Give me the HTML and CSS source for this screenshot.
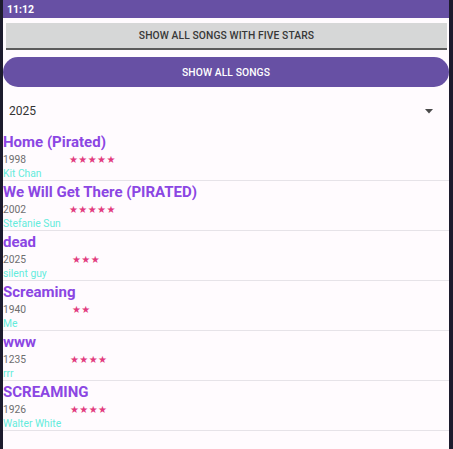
FILE: index.html
```html
<!DOCTYPE html>
<html>
<head>
<meta charset="utf-8">
<link rel="stylesheet" href="styles.css">
</head>
<body>
<div class="screen">
  <div class="status">11:12</div>
  <div class="btn-gray">SHOW ALL SONGS WITH FIVE STARS</div>
  <div class="btn-purple">SHOW ALL SONGS</div>
  <div class="spinner">
    <span class="spinner-value">2025</span>
    <svg class="arrow" width="8" height="5" viewBox="0 0 8 5"><path d="M0 0H8L4 4.5Z" fill="#4a4a4a"/></svg>
  </div>
  <div class="list">
    <div class="item">
      <div class="title">Home (Pirated)</div>
      <div class="meta"><span class="year">1998</span><span class="stars s5">★★★★★</span></div>
      <div class="artist">Kit Chan</div>
    </div>
    <div class="item">
      <div class="title">We Will Get There (PIRATED)</div>
      <div class="meta"><span class="year">2002</span><span class="stars s5">★★★★★</span></div>
      <div class="artist">Stefanie Sun</div>
    </div>
    <div class="item">
      <div class="title">dead</div>
      <div class="meta"><span class="year">2025</span><span class="stars s3">★★★</span></div>
      <div class="artist">silent guy</div>
    </div>
    <div class="item">
      <div class="title">Screaming</div>
      <div class="meta"><span class="year">1940</span><span class="stars s2">★★</span></div>
      <div class="artist">Me</div>
    </div>
    <div class="item">
      <div class="title">www</div>
      <div class="meta"><span class="year">1235</span><span class="stars s4">★★★★</span></div>
      <div class="artist">rrr</div>
    </div>
    <div class="item">
      <div class="title">SCREAMING</div>
      <div class="meta"><span class="year">1926</span><span class="stars s4">★★★★</span></div>
      <div class="artist">Walter White</div>
    </div>
  </div>
</div>
</body>
</html>
```
FILE: styles.css
```css
html, body {
  margin: 0;
  padding: 0;
  background: #1c1b2d;
}
body {
  width: 453px;
  height: 449px;
  overflow: hidden;
  font-family: Roboto, "Liberation Sans", sans-serif;
}
.screen {
  margin: 0 4px 0 3px;
  height: 449px;
  background: #fffbfe;
  display: flex;
  flex-direction: column;
}
.status {
  height: 18px;
  background: #6750a4;
  color: #ffffff;
  font-size: 10.5px;
  font-weight: 700;
  line-height: 19px;
  padding-left: 4px;
}
.btn-gray {
  margin: 5px 2px 0 3px;
  height: 25px;
  background: #d6d7d7;
  border-bottom: 2px solid #5b5b5b;
  color: #383838;
  font-size: 10.3px;
  font-weight: 500;
  display: flex;
  align-items: center;
  justify-content: center;
  letter-spacing: 0.1px;
}
.btn-purple {
  margin-top: 7px;
  height: 30px;
  border-radius: 15px;
  background: #6750a4;
  color: #ffffff;
  font-size: 10.3px;
  font-weight: 500;
  display: flex;
  align-items: center;
  justify-content: center;
  letter-spacing: 0.1px;
}
.spinner {
  height: 40px;
  padding: 4px 13px 0 6px;
  display: flex;
  align-items: center;
  justify-content: space-between;
}
.spinner-value {
  font-size: 12px;
  color: #333333;
}
.arrow {
  display: block;
  margin-right: 3px;
}
.list {
  display: flex;
  flex-direction: column;
}
.item {
  height: 47px;
  padding-top: 2px;
  border-bottom: 1px solid #e6e3e8;
  display: flex;
  flex-direction: column;
}
.title {
  font-size: 15px;
  font-weight: 700;
  color: #8b46e3;
  line-height: 19px;
}
.meta {
  display: flex;
  align-items: center;
  height: 15px;
}
.year {
  font-size: 10.3px;
  color: #6e6e6e;
  width: 66px;
}
.stars {
  font-family: "DejaVu Sans", sans-serif;
  font-size: 10px;
  color: #e23b7e;
  letter-spacing: 0.4px;
}
.s3, .s2 { margin-left: 3px; }
.s4 { margin-left: 1px; }
.artist {
  font-size: 10.3px;
  color: #64ecdc;
  line-height: 13px;
}
```
